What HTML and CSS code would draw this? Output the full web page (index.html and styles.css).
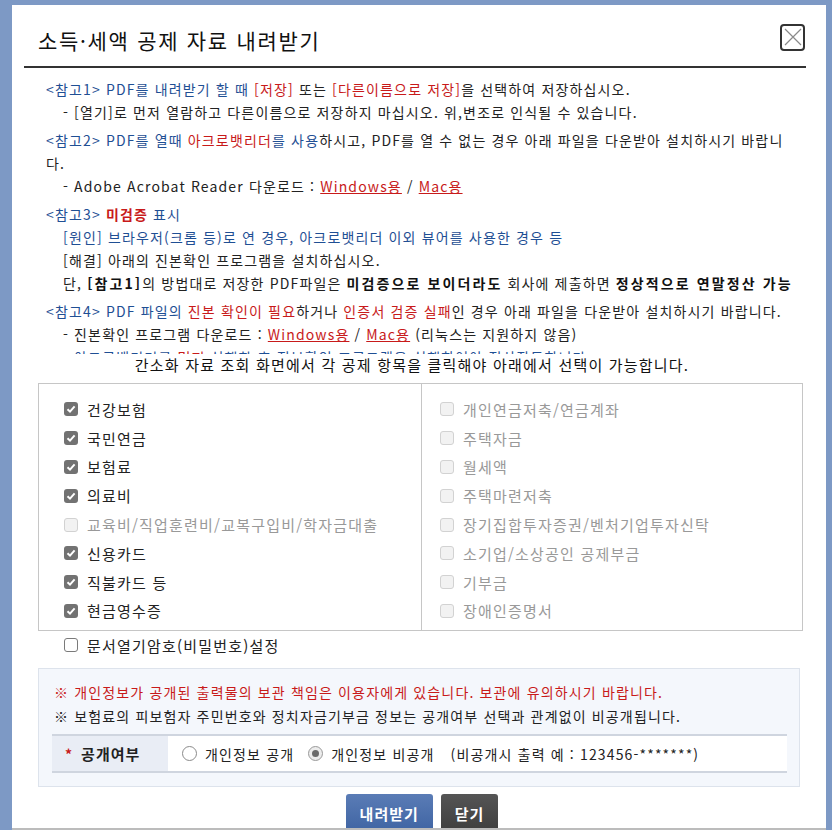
FILE: index.html
```html
<!DOCTYPE html>
<html lang="ko">
<head>
    <meta charset="UTF-8">
    <meta name="viewport" content="width=device-width, initial-scale=1.0">
    <title>소득·세액 공제 자료 내려받기</title>
    <link rel="stylesheet" href="styles.css">
</head>
<body>
    <div class="dialog">
        <div class="dlg-head">
            <h2 class="dlg-title">소득·세액 공제 자료 내려받기</h2>
            <button class="btn-close" title="닫기">
                <svg width="20" height="20" viewBox="0 0 20 20"><path d="M2 2 L18 18 M18 2 L2 18" stroke="#8a8a8a" stroke-width="1.2" fill="none"/></svg>
            </button>
        </div>

        <div class="notice">
            <div class="note">
                <p><span class="c-blue">&lt;참고1&gt; PDF를 내려받기 할 때</span> <span class="c-red">[저장]</span> 또는 <span class="c-red">[다른이름으로 저장]</span>을 선택하여 저장하십시오.</p>
                <p class="sub">- [열기]로 먼저 열람하고 다른이름으로 저장하지 마십시오. 위,변조로 인식될 수 있습니다.</p>
            </div>
            <div class="note">
                <p><span class="c-blue">&lt;참고2&gt; PDF를 열때</span> <span class="c-red">아크로뱃리더</span><span class="c-blue">를 사용</span>하시고, PDF를 열 수 없는 경우 아래 파일을 다운받아 설치하시기 바랍니다.</p>
                <p class="sub">- Adobe Acrobat Reader 다운로드 : <a href="#">Windows용</a> / <a href="#">Mac용</a></p>
            </div>
            <div class="note">
                <p><span class="c-blue">&lt;참고3&gt;</span> <strong class="c-red">미검증</strong> <span class="c-blue">표시</span></p>
                <p class="sub c-blue">[원인] 브라우저(크롬 등)로 연 경우, 아크로뱃리더 이외 뷰어를 사용한 경우 등</p>
                <p class="sub">[해결] 아래의 진본확인 프로그램을 설치하십시오.</p>
                <p class="sub nowrap">단, <strong class="wide">[참고1]</strong>의 방법대로 저장한 PDF파일은 <strong class="wide">미검증으로 보이더라도</strong> 회사에 제출하면 <strong class="wide">정상적으로 연말정산 가능</strong></p>
            </div>
            <div class="note">
                <p><span class="c-blue">&lt;참고4&gt; PDF 파일의</span> <span class="c-red">진본 확인이 필요</span>하거나 <span class="c-red">인증서 검증 실패</span>인 경우 아래 파일을 다운받아 설치하시기 바랍니다.</p>
                <p class="sub">- 진본확인 프로그램 다운로드 : <a href="#">Windows용</a> / <a href="#">Mac용</a> (리눅스는 지원하지 않음)</p>
                <p class="sub c-blue">- 아크로뱃리더를 <span class="c-red">먼저</span> 실행한 후 진본확인 프로그램을 실행하여야 정상작동합니다.</p>
            </div>
        </div>

        <p class="guide">간소화 자료 조회 화면에서 각 공제 항목을 클릭해야 아래에서 선택이 가능합니다.</p>

        <div class="choice-box">
            <ul class="choice-list">
                <li><span class="chk on"><svg width="10" height="10" viewBox="0 0 10 10"><path d="M1.5 5.2 L4 7.6 L8.6 2.4" stroke="#fff" stroke-width="2" fill="none"/></svg></span>건강보험</li>
                <li><span class="chk on"><svg width="10" height="10" viewBox="0 0 10 10"><path d="M1.5 5.2 L4 7.6 L8.6 2.4" stroke="#fff" stroke-width="2" fill="none"/></svg></span>국민연금</li>
                <li><span class="chk on"><svg width="10" height="10" viewBox="0 0 10 10"><path d="M1.5 5.2 L4 7.6 L8.6 2.4" stroke="#fff" stroke-width="2" fill="none"/></svg></span>보험료</li>
                <li><span class="chk on"><svg width="10" height="10" viewBox="0 0 10 10"><path d="M1.5 5.2 L4 7.6 L8.6 2.4" stroke="#fff" stroke-width="2" fill="none"/></svg></span>의료비</li>
                <li class="disabled"><span class="chk off"></span>교육비/직업훈련비/교복구입비/학자금대출</li>
                <li><span class="chk on"><svg width="10" height="10" viewBox="0 0 10 10"><path d="M1.5 5.2 L4 7.6 L8.6 2.4" stroke="#fff" stroke-width="2" fill="none"/></svg></span>신용카드</li>
                <li><span class="chk on"><svg width="10" height="10" viewBox="0 0 10 10"><path d="M1.5 5.2 L4 7.6 L8.6 2.4" stroke="#fff" stroke-width="2" fill="none"/></svg></span>직불카드 등</li>
                <li><span class="chk on"><svg width="10" height="10" viewBox="0 0 10 10"><path d="M1.5 5.2 L4 7.6 L8.6 2.4" stroke="#fff" stroke-width="2" fill="none"/></svg></span>현금영수증</li>
            </ul>
            <ul class="choice-list right">
                <li class="disabled"><span class="chk off"></span>개인연금저축/연금계좌</li>
                <li class="disabled"><span class="chk off"></span>주택자금</li>
                <li class="disabled"><span class="chk off"></span>월세액</li>
                <li class="disabled"><span class="chk off"></span>주택마련저축</li>
                <li class="disabled"><span class="chk off"></span>장기집합투자증권/벤처기업투자신탁</li>
                <li class="disabled"><span class="chk off"></span>소기업/소상공인 공제부금</li>
                <li class="disabled"><span class="chk off"></span>기부금</li>
                <li class="disabled"><span class="chk off"></span>장애인증명서</li>
            </ul>
        </div>

        <div class="pw-row"><span class="chk empty"></span>문서열기암호(비밀번호)설정</div>

        <div class="info-box">
            <p class="c-red">※ 개인정보가 공개된 출력물의 보관 책임은 이용자에게 있습니다. 보관에 유의하시기 바랍니다.</p>
            <p>※ 보험료의 피보험자 주민번호와 정치자금기부금 정보는 공개여부 선택과 관계없이 비공개됩니다.</p>
            <div class="form-row">
                <div class="form-th"><span class="req">*</span>공개여부</div>
                <div class="form-td">
                    <label class="radio"><span class="rd"></span>개인정보 공개</label>
                    <label class="radio"><span class="rd on"></span>개인정보 비공개</label>
                    <span class="example">(비공개시 출력 예 : 123456-*******)</span>
                </div>
            </div>
        </div>

        <div class="btn-area">
            <button class="btn btn-blue">내려받기</button>
            <button class="btn btn-dark">닫기</button>
        </div>
    </div>
</body>
</html>
```

FILE: styles.css
```css
* {
    box-sizing: border-box;
}

html, body {
    margin: 0;
    padding: 0;
}

body {
    height: 830px;
    overflow: hidden;
    background: #7d99c5;
    font-family: "Noto Sans CJK KR", "Noto Sans", sans-serif;
    color: #222;
}

p {
    margin: 0;
}

.dialog {
    margin: 5px 6px 0 12px;
    height: 825px;
    padding: 0 20px 0 12px;
    background: #fff;
    overflow: hidden;
    border-bottom: 2px solid #bcbcbc;
}

.dlg-head {
    display: flex;
    align-items: center;
    justify-content: space-between;
    height: 63px;
    padding: 8px 1px 0 14px;
    border-bottom: 2px solid #333;
}

.dlg-title {
    margin: 0;
    font-size: 21px;
    font-weight: normal;
    letter-spacing: 1.7px;
    color: #111;
}

.btn-close {
    display: flex;
    align-items: center;
    justify-content: center;
    width: 25px;
    height: 27px;
    padding: 0;
    margin-top: -5px;
    border: 2px solid #333;
    border-radius: 4px;
    background: #fff;
    cursor: pointer;
}

.notice {
    height: 286px;
    overflow: hidden;
    padding: 10px 12px 0 22px;
    font-size: 14px;
    letter-spacing: 1.15px;
    line-height: 23px;
}

.note {
    margin-bottom: 5px;
}

.note .sub {
    padding-left: 17px;
}

.nowrap {
    white-space: nowrap;
}

.note strong {
    color: #111;
}

.note strong.wide {
    letter-spacing: 2.1px;
}

.note strong.c-red {
    color: #c81a1a;
}

.c-blue { color: #1f4f94; }
.c-red { color: #c81a1a; }

.note a {
    color: #c81a1a;
}

.guide {
    margin: 1px 0 8px;
    padding-right: 6px;
    text-align: center;
    font-size: 15px;
    letter-spacing: 1.2px;
    line-height: 20px;
    color: #111;
}

.choice-box {
    display: grid;
    grid-template-columns: 382px 1fr;
    margin: 0 3px 0 14px;
    border: 1px solid #c6c6c6;
}

.choice-list {
    list-style: none;
    margin: 0;
    padding: 11px 0 5px 25px;
}

.choice-list.right {
    padding-left: 18px;
    border-left: 1px solid #c6c6c6;
}

.choice-list li {
    display: flex;
    align-items: center;
    height: 28.8px;
    font-size: 15px;
    letter-spacing: 1.2px;
    color: #222;
}

.choice-list li.disabled {
    color: #999;
}

.chk {
    display: inline-flex;
    align-items: center;
    justify-content: center;
    flex: none;
    width: 14px;
    height: 14px;
    margin-right: 9px;
    border-radius: 3px;
}

.chk.on {
    background: #727272;
}

.chk.off {
    background: #f2f2f2;
    border: 1px solid #d2d2d2;
}

.chk.empty {
    background: #fff;
    border: 1px solid #7a7a7a;
}

.pw-row {
    display: flex;
    align-items: center;
    height: 28px;
    padding-left: 40px;
    font-size: 15px;
    letter-spacing: 1.2px;
    color: #222;
}

.info-box {
    margin: 9px 6px 0 14px;
    padding: 11px 12px 13px 13px;
    background: #f4f7fc;
    border: 1px solid #dde3ec;
    font-size: 14px;
    letter-spacing: 1.15px;
    line-height: 24px;
}

.info-box > p {
    padding-left: 2px;
}

.form-row {
    display: flex;
    height: 39px;
    margin-top: 6px;
    border-top: 2px solid #cfd5df;
    border-bottom: 2px solid #cfd5df;
    background: #fff;
}

.form-th {
    display: flex;
    align-items: center;
    width: 116px;
    padding-left: 13px;
    background: #e9edf5;
    font-size: 15px;
    font-weight: bold;
    color: #222;
    letter-spacing: 1px;
}

.req {
    color: #c81a1a;
    font-size: 14px;
    margin-right: 8px;
}

.form-td {
    display: flex;
    align-items: center;
    padding-left: 14px;
    color: #222;
}

.radio {
    display: flex;
    align-items: center;
    margin-right: 14px;
}

.rd {
    position: relative;
    width: 15px;
    height: 15px;
    margin-right: 8px;
    border: 1px solid #8a8a8a;
    border-radius: 50%;
    background: #fff;
}

.rd.on {
    border-color: #9a9a9a;
    background: #ececec;
}

.rd.on::after {
    content: "";
    position: absolute;
    left: 3px;
    top: 3px;
    width: 7px;
    height: 7px;
    border-radius: 50%;
    background: #6a6a6a;
}

.example {
    margin-left: 2px;
}

.btn-area {
    display: flex;
    justify-content: center;
    gap: 8px;
    margin: 7px 0 0 14px;
}

.btn {
    height: 38px;
    padding: 0 14px;
    border: none;
    border-radius: 3px 3px 0 0;
    font-family: inherit;
    font-size: 15px;
    font-weight: bold;
    letter-spacing: 1px;
    color: #fff;
    cursor: pointer;
}

.btn-blue {
    background: linear-gradient(#5a7cb6, #3f64a3);
}

.btn-dark {
    background: linear-gradient(#555, #3e3e3e);
}
```
